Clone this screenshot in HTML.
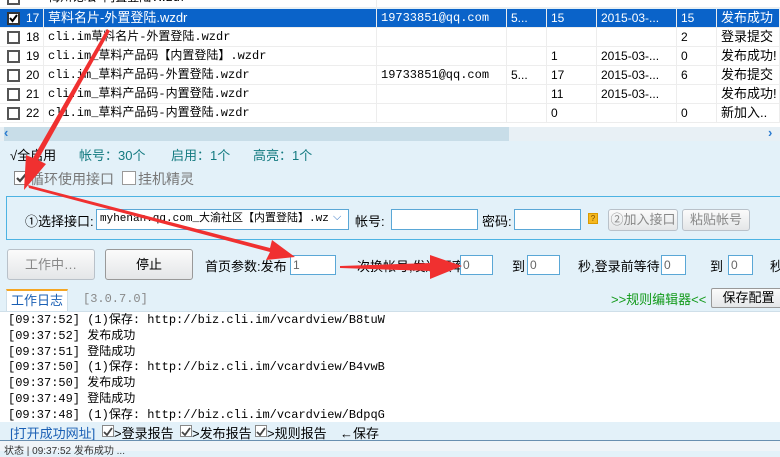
<!DOCTYPE html>
<html><head><meta charset="utf-8"><style>
*{margin:0;padding:0;box-sizing:border-box}
body{width:780px;height:451px;overflow:hidden;background:#e3f1f9;font-family:"Liberation Sans","Noto Sans CJK SC",sans-serif;font-size:12px;color:#000;position:relative}
.a{position:absolute;white-space:nowrap}
.m{font-family:"Liberation Mono","Noto Sans CJK SC",monospace;font-size:12px}
.row{position:absolute;left:0;width:780px;height:19px;background:#fff;border-bottom:1px solid #ededed}
.row .c{position:absolute;top:0;height:19px;line-height:18px;border-right:1px solid #ededed;padding-left:4px;overflow:hidden}
.row.sel{background:#0a63c9;color:#fff}
.cb{position:absolute;left:7px;top:3px;width:13px;height:13px;border:2px solid #555;background:#fff}
.inp{position:absolute;background:#fff;border:1px solid #5aa7d6}
.btn{position:absolute;border:1px solid #b9c1c9;border-radius:3px;background:linear-gradient(#fbfbfb,#e4e6e8);text-align:center}
.chk{position:absolute;width:14px;height:14px;border:1px solid #888;background:#fff}
.log div{height:15.8px;line-height:15.8px;overflow:hidden}
</style></head><body>
<div class="row" style="top:-11px"><div class="cb"></div><div class="c m" style="left:44px;width:333px">梅州论坛-内置登陆.wzdr</div></div>
<div class="row sel" style="top:9px"><div class="cb" style="border-color:#333"><svg width="9" height="9" style="position:absolute;left:0;top:0"><path d="M1 4 L3.5 7 L8 1" stroke="#000" stroke-width="2" fill="none"/></svg></div>
<div class="c" style="left:22px;width:22px">17</div><div class="c" style="left:44px;width:333px;font-size:13px">草料名片-外置登陆.wzdr</div><div class="c m" style="left:377px;width:130px">19733851@qq.com</div><div class="c" style="left:507px;width:40px">5...</div><div class="c" style="left:547px;width:50px">15</div><div class="c" style="left:597px;width:80px">2015-03-...</div><div class="c" style="left:677px;width:40px">15</div><div class="c" style="left:717px;width:63px;font-size:13px">发布成功</div></div>
<div class="row" style="top:28px"><div class="cb"></div><div class="c" style="left:22px;width:22px">18</div><div class="c m" style="left:44px;width:333px">cli.im草料名片-外置登陆.wzdr</div><div class="c" style="left:377px;width:130px"></div><div class="c" style="left:507px;width:40px"></div><div class="c" style="left:547px;width:50px"></div><div class="c" style="left:597px;width:80px"></div><div class="c" style="left:677px;width:40px">2</div><div class="c" style="left:717px;width:63px;font-size:13px">登录提交1条</div></div>
<div class="row" style="top:47px"><div class="cb"></div><div class="c" style="left:22px;width:22px">19</div><div class="c m" style="left:44px;width:333px">cli.im_草料产品码【内置登陆】.wzdr</div><div class="c" style="left:377px;width:130px"></div><div class="c" style="left:507px;width:40px"></div><div class="c" style="left:547px;width:50px">1</div><div class="c" style="left:597px;width:80px">2015-03-...</div><div class="c" style="left:677px;width:40px">0</div><div class="c" style="left:717px;width:63px;font-size:13px">发布成功!</div></div>
<div class="row" style="top:66px"><div class="cb"></div><div class="c" style="left:22px;width:22px">20</div><div class="c m" style="left:44px;width:333px">cli.im_草料产品码-外置登陆.wzdr</div><div class="c m" style="left:377px;width:130px">19733851@qq.com</div><div class="c" style="left:507px;width:40px">5...</div><div class="c" style="left:547px;width:50px">17</div><div class="c" style="left:597px;width:80px">2015-03-...</div><div class="c" style="left:677px;width:40px">6</div><div class="c" style="left:717px;width:63px;font-size:13px">发布提交1条</div></div>
<div class="row" style="top:85px"><div class="cb"></div><div class="c" style="left:22px;width:22px">21</div><div class="c m" style="left:44px;width:333px">cli.im_草料产品码-内置登陆.wzdr</div><div class="c" style="left:377px;width:130px"></div><div class="c" style="left:507px;width:40px"></div><div class="c" style="left:547px;width:50px">11</div><div class="c" style="left:597px;width:80px">2015-03-...</div><div class="c" style="left:677px;width:40px"></div><div class="c" style="left:717px;width:63px;font-size:13px">发布成功!</div></div>
<div class="row" style="top:104px"><div class="cb"></div><div class="c" style="left:22px;width:22px">22</div><div class="c m" style="left:44px;width:333px">cli.im_草料产品码-内置登陆.wzdr</div><div class="c" style="left:377px;width:130px"></div><div class="c" style="left:507px;width:40px"></div><div class="c" style="left:547px;width:50px">0</div><div class="c" style="left:597px;width:80px"></div><div class="c" style="left:677px;width:40px">0</div><div class="c" style="left:717px;width:63px;font-size:13px">新加入..</div></div>
<div class="row" style="top:123px;height:5px"></div>
<div class="a" style="left:0;top:127px;width:780px;height:14px;background:#e8f0f5"></div>
<div class="a" style="left:4px;top:127px;width:505px;height:14px;background:#c8dde8"></div>
<div class="a" style="left:4px;top:125px;color:#2b7bd0;font-size:13px;font-weight:bold">‹</div>
<div class="a" style="left:768px;top:125px;color:#2b7bd0;font-size:13px;font-weight:bold">›</div>
<div class="a" style="left:10px;top:145px;font-size:13px">√全启用</div>
<div class="a" style="left:79px;top:145px;font-size:13px;color:#137a80">帐号：30个</div>
<div class="a" style="left:171px;top:145px;font-size:13px;color:#137a80">启用：1个</div>
<div class="a" style="left:253px;top:145px;font-size:13px;color:#137a80">高亮：1个</div>
<div class="chk" style="left:14px;top:171px"><svg width="12" height="12"><path d="M2 6 L5 9 L11 2" stroke="#444" stroke-width="2.2" fill="none"/></svg></div>
<div class="a" style="left:30px;top:169px;font-size:14px;color:#777">循环使用接口</div>
<div class="chk" style="left:122px;top:171px;border-color:#999"></div>
<div class="a" style="left:138px;top:169px;font-size:14px;color:#777">挂机精灵</div>
<div class="a" style="left:6px;top:196px;width:780px;height:44px;border:1px solid #4cb3e3;border-right:none"></div>
<div class="a" style="left:25px;top:211px;font-size:13px">①选择接口:</div>
<div class="inp" style="left:96px;top:209px;width:253px;height:21px;font-family:'Liberation Mono','Noto Sans CJK SC',monospace;font-size:11px;line-height:19px;padding-left:3px">myhenan.qq.com_大渝社区【内置登陆】.wz</div>
<div class="a" style="left:333px;top:211px;color:#2b6fc0;font-size:11px">⌵</div>
<div class="a" style="left:355px;top:211px;font-size:13px">帐号:</div>
<div class="inp" style="left:391px;top:209px;width:87px;height:21px"></div>
<div class="a" style="left:482px;top:211px;font-size:13px">密码:</div>
<div class="inp" style="left:514px;top:209px;width:67px;height:21px"></div>
<div class="a" style="left:588px;top:213px;width:10px;height:11px;background:#f5b820;border:1px solid #d99a00;font-size:8px;line-height:9px;text-align:center;color:#7a4d00">?</div>
<div class="btn" style="left:608px;top:209px;width:70px;height:22px;line-height:20px;color:#888;font-size:13px">②加入接口</div>
<div class="btn" style="left:682px;top:209px;width:68px;height:22px;line-height:20px;color:#888;font-size:13px">粘贴帐号</div>
<div class="btn" style="left:7px;top:249px;width:88px;height:31px;line-height:29px;color:#888;font-size:13px">工作中…</div>
<div class="btn" style="left:105px;top:249px;width:88px;height:31px;line-height:29px;font-size:13px;border-color:#999">停止</div>
<div class="a" style="left:205px;top:256px;font-size:13px">首页参数:发布</div>
<div class="inp" style="left:290px;top:255px;width:46px;height:20px;color:#666;padding-left:2px;line-height:18px">1</div>
<div class="a" style="left:357px;top:256px;font-size:13px">次换帐号,发送频率</div>
<div class="inp" style="left:460px;top:255px;width:33px;height:20px;color:#666;padding-left:2px;line-height:18px">0</div>
<div class="a" style="left:512px;top:256px;font-size:13px">到</div>
<div class="inp" style="left:527px;top:255px;width:33px;height:20px;color:#666;padding-left:2px;line-height:18px">0</div>
<div class="a" style="left:578px;top:256px;font-size:13px">秒,登录前等待</div>
<div class="inp" style="left:661px;top:255px;width:25px;height:20px;color:#666;padding-left:2px;line-height:18px">0</div>
<div class="a" style="left:710px;top:256px;font-size:13px">到</div>
<div class="inp" style="left:728px;top:255px;width:25px;height:20px;color:#666;padding-left:2px;line-height:18px">0</div>
<div class="a" style="left:770px;top:256px;font-size:13px">秒</div>
<div class="a" style="left:6px;top:289px;width:62px;height:23px;background:#fff;border-top:2px solid #f5a623;border-left:1px solid #cfdfe9;border-right:1px solid #cfdfe9;color:#1a5fb4;font-size:13px;text-align:center;line-height:20px">工作日志</div>
<div class="a m" style="left:83px;top:292px;color:#888">[3.0.7.0]</div>
<div class="a" style="left:611px;top:289px;color:#129a1a;font-size:13px">&gt;&gt;规则编辑器&lt;&lt;</div>
<div class="btn" style="left:711px;top:288px;width:75px;height:20px;line-height:18px;font-size:13px;border-radius:2px;border-color:#999">保存配置</div>
<div class="a" style="left:0;top:311px;width:780px;height:111px;background:#fff;border-top:1px solid #cfdfe9"></div>
<div class="a log" style="left:8px;top:313px;font-size:12px;font-family:'Liberation Mono','Noto Sans CJK SC',monospace;height:109px;overflow:hidden">
<div>[09:37:52] (1)保存: http://biz.cli.im/vcardview/B8tuW</div>
<div>[09:37:52] 发布成功</div>
<div>[09:37:51] 登陆成功</div>
<div>[09:37:50] (1)保存: http://biz.cli.im/vcardview/B4vwB</div>
<div>[09:37:50] 发布成功</div>
<div>[09:37:49] 登陆成功</div>
<div>[09:37:48] (1)保存: http://biz.cli.im/vcardview/BdpqG</div>
</div>
<div class="a" style="left:0;top:422px;width:780px;height:18px;background:#e3f1f9"></div>
<div class="a" style="left:10px;top:423px;color:#1a5fb4;font-size:13px">[打开成功网址]</div>
<div class="chk" style="left:102px;top:425px;width:12px;height:12px"><svg width="10" height="10"><path d="M1 5 L4 8 L9 1" stroke="#444" stroke-width="1.8" fill="none"/></svg></div>
<div class="a" style="left:114px;top:423px;font-size:13px">&gt;登录报告</div>
<div class="chk" style="left:180px;top:425px;width:12px;height:12px"><svg width="10" height="10"><path d="M1 5 L4 8 L9 1" stroke="#444" stroke-width="1.8" fill="none"/></svg></div>
<div class="a" style="left:192px;top:423px;font-size:13px">&gt;发布报告</div>
<div class="chk" style="left:255px;top:425px;width:12px;height:12px"><svg width="10" height="10"><path d="M1 5 L4 8 L9 1" stroke="#444" stroke-width="1.8" fill="none"/></svg></div>
<div class="a" style="left:267px;top:423px;font-size:13px">&gt;规则报告</div>
<div class="a" style="left:340px;top:423px;font-size:13px">←保存</div>
<div class="a" style="left:0;top:440px;width:780px;height:11px;background:#f0f4f8;border-top:1px solid #6a8fb0"></div>
<div class="a" style="left:4px;top:442px;font-size:10px;color:#333">状态 | 09:37:52 发布成功 ...</div>
<svg class="a" style="left:0;top:0" width="780" height="451">
<path d="M107 29 L110 31 L38 160 L46 164 L24 190 L26 155 L33 158 Z" fill="#f03030"/>
<path d="M28 185 L29 188 L270 252 L266 260 L295 257 L272 240 L270 248 Z" fill="#f03030"/>
<path d="M340 266 L430 263 L430 255 L462 266 L430 279 L430 271 L340 268 Z" fill="#f03030"/>
</svg>
</body></html>
